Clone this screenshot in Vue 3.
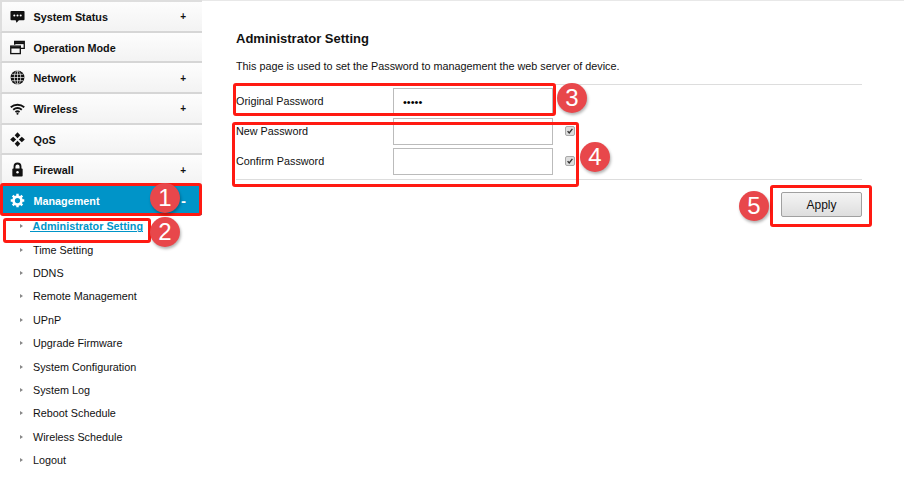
<template>
  <div class="page">
    <aside class="sidebar">
      <div
        v-for="m in menus"
        :key="m.label"
        class="menu-item"
        :class="{ active: m.active }"
      >
        <span class="menu-icon">
          <svg v-if="m.icon === 'status'" viewBox="0 0 16 16" width="15" height="15">
            <path d="M1.500 2h13a1 1 0 0 1 1 1v8a1 1 0 0 1-1 1H9.500L7 14.600 6 12H1.500a1 1 0 0 1-1-1V3a1 1 0 0 1 1-1z" fill="currentColor" />
            <circle cx="4.600" cy="7" r="1.100" fill="#fff" />
            <circle cx="8" cy="7" r="1.100" fill="#fff" />
            <circle cx="11.400" cy="7" r="1.100" fill="#fff" />
          </svg>
          <svg v-else-if="m.icon === 'mode'" viewBox="0 0 16 16" width="15" height="15" fill="none" stroke="currentColor" stroke-width="1.400">
            <path d="M5 5V1.500h10.200v7.500h-4" />
            <path d="M5 3.300h10" stroke-width="2.200" />
            <rect x=".8" y="6.500" width="10.200" height="8" />
            <path d="M1 8h10" stroke-width="2.200" />
          </svg>
          <svg v-else-if="m.icon === 'globe'" viewBox="0 0 16 16" width="15" height="15">
            <circle cx="8" cy="8" r="7.400" fill="currentColor" />
            <path d="M8 .6v14.800M.6 8h14.800M2 4.600h12M2 11.400h12" stroke="#fff" stroke-width=".7" />
            <ellipse cx="8" cy="8" rx="3.400" ry="7.400" fill="none" stroke="#fff" stroke-width=".7" />
          </svg>
          <svg v-else-if="m.icon === 'wifi'" viewBox="0 0 16 16" width="15" height="15" fill="none" stroke="currentColor" stroke-width="2">
            <path d="M.8 6.600c4.200-3.400 10.200-3.400 14.400 0" />
            <path d="M3.400 9.300c2.800-2.200 6.400-2.200 9.200 0" />
            <path d="M5.800 11.800c1.400-1 3-1 4.400 0" />
            <circle cx="8" cy="13.600" r="1.100" fill="currentColor" stroke="none" />
          </svg>
          <svg v-else-if="m.icon === 'qos'" viewBox="0 0 16 16" width="15" height="15" fill="currentColor">
            <path d="M8 .2l3 3.200-3 3.200-3-3.200z" />
            <path d="M8 9.400l3 3.200-3 3.200-3-3.200z" />
            <path d="M3.400 5L6.600 8l-3.200 3L.2 8z" />
            <path d="M12.600 5L15.800 8l-3.200 3L9.400 8z" />
          </svg>
          <svg v-else-if="m.icon === 'lock'" viewBox="0 0 16 16" width="15" height="15">
            <path d="M4.800 7.500V4.800a3.200 3.200 0 0 1 6.400 0v2.700" fill="none" stroke="currentColor" stroke-width="2" />
            <path d="M3.500 7h9a1 1 0 0 1 1 1v6.500a1 1 0 0 1-1 1h-9a1 1 0 0 1-1-1V8a1 1 0 0 1 1-1z" fill="currentColor" />
            <circle cx="8" cy="11" r="1.300" fill="#fff" />
          </svg>
          <svg v-else viewBox="0 0 16 16" width="15" height="15">
            <circle cx="8" cy="8" r="4.200" fill="none" stroke="currentColor" stroke-width="2.800" />
            <path d="M8 .8v3M8 12.200v3M.8 8h3M12.200 8h3M2.900 2.900l2.100 2.100M11 11l2.100 2.100M13.100 2.900L11 5M5 11l-2.100 2.100" stroke="currentColor" stroke-width="2.600" />
          </svg>
        </span>
        <span class="menu-label">{{ m.label }}</span>
        <span v-if="m.mark" class="menu-mark">{{ m.mark }}</span>
      </div>
      <ul class="submenu">
        <li v-for="(s, i) in subItems" :key="s" :class="{ current: i === 0 }">
          <span class="arrow"></span>
          <a>{{ i === 0 ? ' ' + s : s }}</a>
        </li>
      </ul>
    </aside>

    <main class="content">
      <h2>Administrator Setting</h2>
      <p class="desc">This page is used to set the Password to management the web server of device.</p>
      <div class="form">
        <div v-for="f in fields" :key="f.label" class="form-row">
          <label>{{ f.label }}</label>
          <input type="text" :value="f.value" readonly />
          <span v-if="f.check" class="check">
            <svg viewBox="0 0 10 10" width="10" height="10">
              <path d="M2 5.200l2 2.200 4-5" fill="none" stroke="#333" stroke-width="1.700" />
            </svg>
          </span>
        </div>
      </div>
      <div class="actions">
        <button type="button">Apply</button>
      </div>
    </main>

    <!-- red tutorial marks on top of the page -->
    <div
      v-for="b in boxes"
      :key="b.n"
      class="mark-box"
      :style="{ left: b.x + 'px', top: b.y + 'px', width: b.w + 'px', height: b.h + 'px' }"
    ></div>
    <div
      v-for="b in boxes"
      :key="'c' + b.n"
      class="mark-num"
      :style="{ left: b.cx - 15 + 'px', top: b.cy - 15 + 'px' }"
    >{{ b.n }}</div>
  </div>
</template>

<script setup>
const menus = [
  { label: 'System Status', icon: 'status', mark: '+' },
  { label: 'Operation Mode', icon: 'mode' },
  { label: 'Network', icon: 'globe', mark: '+' },
  { label: 'Wireless', icon: 'wifi', mark: '+' },
  { label: 'QoS', icon: 'qos' },
  { label: 'Firewall', icon: 'lock', mark: '+' },
  { label: 'Management', icon: 'gear', mark: '-', active: true },
];

const subItems = [
  'Administrator Setting',
  'Time Setting',
  'DDNS',
  'Remote Management',
  'UPnP',
  'Upgrade Firmware',
  'System Configuration',
  'System Log',
  'Reboot Schedule',
  'Wireless Schedule',
  'Logout',
];

const fields = [
  { label: 'Original Password', value: '•••••' },
  { label: 'New Password', value: '', check: true },
  { label: 'Confirm Password', value: '', check: true },
];

const boxes = [
  { n: 1, x: 0, y: 183, w: 202, h: 33, cx: 165, cy: 198 },
  { n: 2, x: 3, y: 218, w: 148, h: 25, cx: 165, cy: 232 },
  { n: 3, x: 233, y: 83, w: 323, h: 33, cx: 572, cy: 98 },
  { n: 4, x: 232, y: 122, w: 347, h: 65, cx: 595, cy: 157 },
  { n: 5, x: 770, y: 185, w: 102, h: 42, cx: 754, cy: 206 },
];
</script>

<style>
html,
body {
  background: #fff;
  overflow: hidden;
}
</style>

<style scoped>
.page {
  position: relative;
  display: flex;
  width: 904px;
  height: 479px;
  overflow: hidden;
  font-family: "Liberation Sans", Arial, sans-serif;
  font-size: 10.8px;
  color: #111;
  background: #fff;
}
.sidebar {
  width: 202px;
  flex: none;
  padding-top: 2px;
  box-sizing: border-box;
  background: linear-gradient(#dedede, #dedede) top / 100% 2px no-repeat;
}
.menu-item {
  display: flex;
  align-items: center;
  height: 27.7px;
  padding: 1px 16px 0 8px;
  border-left: 2px solid #dedede;
  border-bottom: 2px solid #d6d6d6;
  background: linear-gradient(to bottom, #fdfdfd, #f3f3f3);
  color: #111;
  font-weight: bold;
}
.menu-item.active {
  background: #0094c8;
  color: #fff;
  border-bottom: none;
  height: 27.6px;
}
.menu-icon {
  display: flex;
  width: 23.5px;
  flex: none;
  margin-top: -1px;
}
.menu-label {
  flex: 1;
}
.menu-mark {
  font-size: 10px;
}
.active .menu-mark {
  font-size: 15px;
}
.submenu {
  list-style: none;
  margin: -0.15px 0 0;
  padding: 0;
}
.submenu li {
  display: flex;
  align-items: center;
  height: 23.4px;
  padding-left: 20px;
  white-space: nowrap;
}
.arrow {
  width: 0;
  height: 0;
  margin-right: 10px;
  border-left: 3px solid #888;
  border-top: 2px solid transparent;
  border-bottom: 2px solid transparent;
}
.submenu li.current a {
  margin-left: -3px;
  color: #0094c8;
  font-weight: bold;
  text-decoration: underline;
  white-space: pre;
}
.content {
  flex: 1;
  padding: 30px 42px 0 34px;
  border-top: 1px solid #e8e8e8;
}
h2 {
  margin: 0;
  font-size: 13px;
  line-height: 16px;
  color: #111;
}
.desc {
  margin: 12px 0 0;
  line-height: 14px;
}
.form {
  margin-top: 11px;
  padding: 3px 0 1px;
  border-top: 1px solid #ddd;
  border-bottom: 1px solid #ddd;
}
.form-row {
  display: flex;
  align-items: flex-start;
  height: 30px;
}
.form-row label {
  width: 157px;
  flex: none;
  line-height: 26px;
}
.form-row input {
  width: 160px;
  height: 27px;
  box-sizing: border-box;
  border: 1px solid #bbb;
  padding: 0 9px;
  margin: 0;
  font: 11px "Liberation Sans", Arial, sans-serif;
  outline: none;
}
.check {
  display: flex;
  box-sizing: border-box;
  width: 10px;
  height: 10px;
  margin: 8px 0 0 12px;
  background: #dcdcdc;
  border: 1px solid #aaa;
  border-radius: 2px;
  align-items: center;
  justify-content: center;
  overflow: hidden;
}
.actions {
  display: flex;
  justify-content: flex-end;
  margin-top: 12px;
}
button {
  width: 81px;
  height: 25px;
  border: 1px solid #a0a0a0;
  border-radius: 2px;
  background: linear-gradient(#f4f4f4, #dedede);
  font: 12px "Liberation Sans", Arial, sans-serif;
  color: #111;
}
.mark-box {
  position: absolute;
  box-sizing: border-box;
  border: 3px solid #ff1a12;
  border-radius: 3px;
}
.mark-num {
  position: absolute;
  width: 30px;
  height: 30px;
  border-radius: 50%;
  background: #e8474b;
  color: #fff;
  font-size: 24px;
  line-height: 30px;
  text-align: center;
  box-shadow: 1px 2px 3px rgba(0, 0, 0, 0.3);
}
</style>
